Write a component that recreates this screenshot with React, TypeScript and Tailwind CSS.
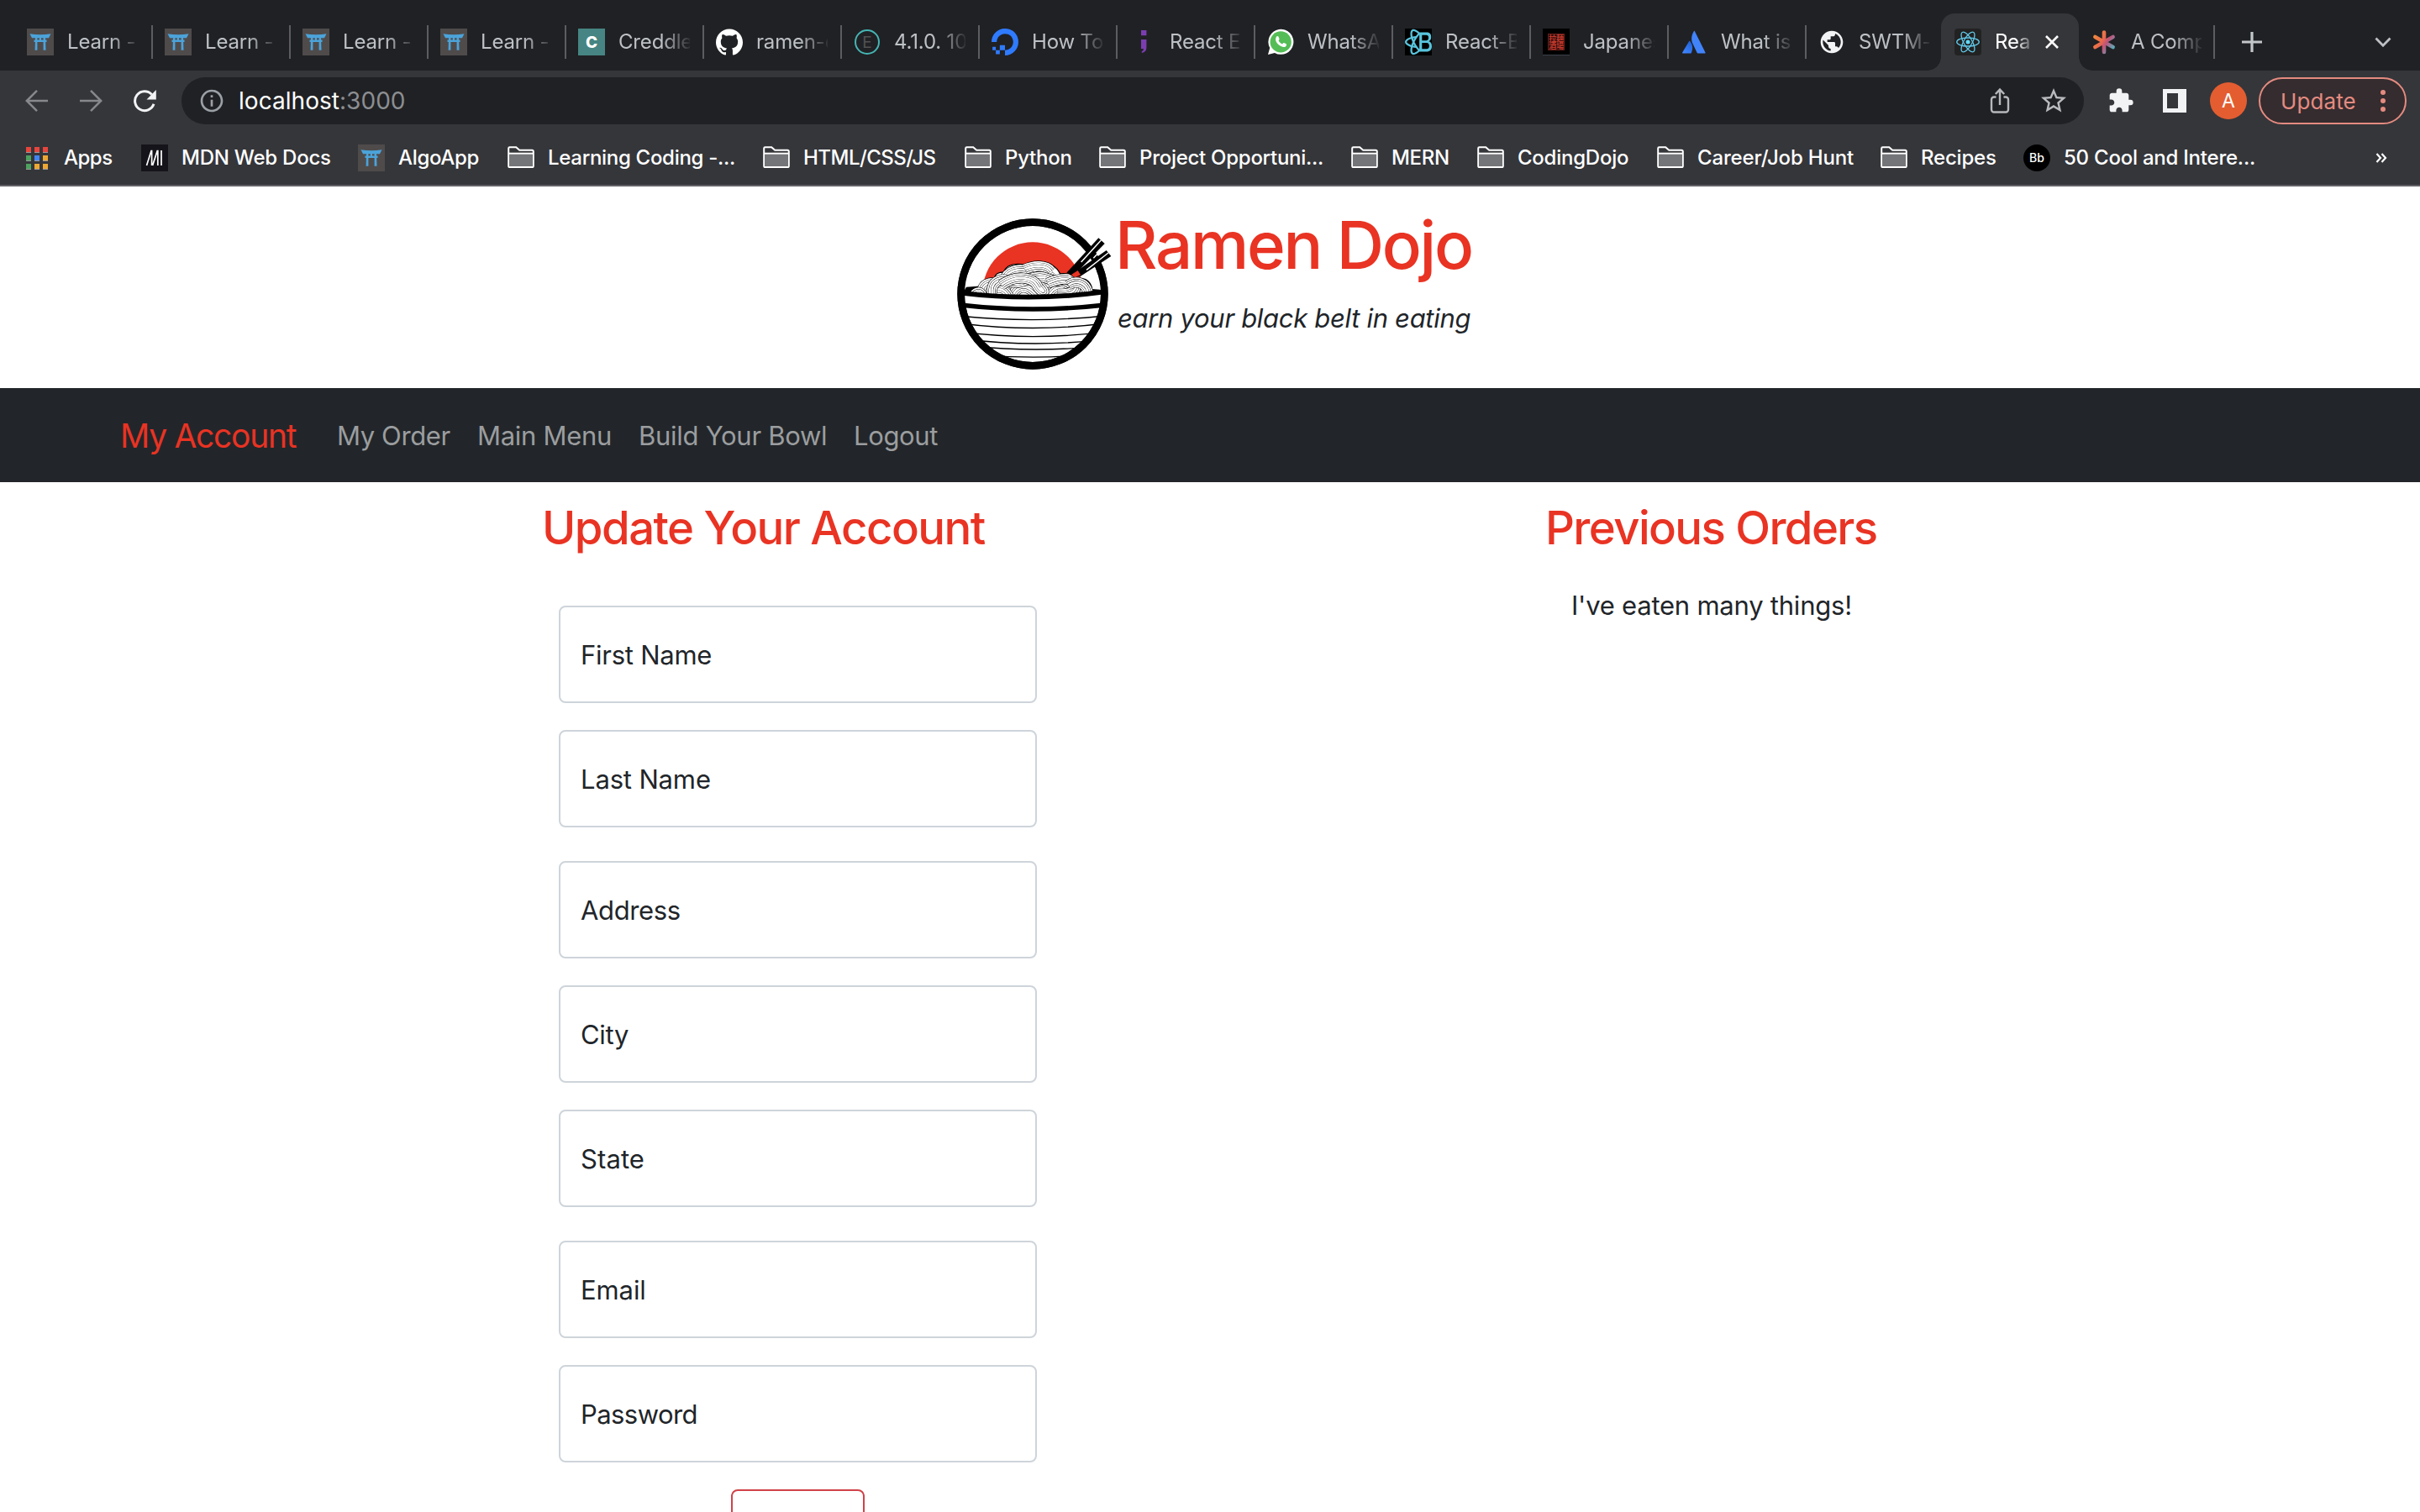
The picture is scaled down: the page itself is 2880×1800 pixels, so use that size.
import React from 'react';
import { SiDigitalocean, SiGithub, SiReactbootstrap } from 'react-icons/si';
import { MdExtension, MdInfoOutline, MdPublic, MdStarBorder } from 'react-icons/md';

function Torii() {
  return (
    <svg viewBox="0 0 32 32" className="size-8 bg-[#4f4b4b]">
      <path d="M3.5 6.3c8 1.4 17 1.4 25 0L26 11.2H6z" fill="#4ba3da" />
      <path d="M8.5 13.4h15v2.6h-15zM10 11h2.4v14.8H9.6zM19.6 11H22l.5 14.8h-2.9zM14.8 11h2.2v3h-2.2z" fill="#4ba3da" />
    </svg>
  );
}

function Credly() {
  return (
    <span className="flex size-8 items-center justify-center bg-[#468583] font-['Inter'] text-[19px] font-extrabold leading-none text-white">
      C
    </span>
  );
}

function EcmaRing() {
  return (
    <span className="flex size-8 items-center justify-center">
      <span className="flex size-[30px] items-center justify-center rounded-full border-2 border-[#45b5b4] text-[19px] leading-none text-[#515254]">
        E
      </span>
    </span>
  );
}

function Semicolon() {
  return (
    <svg viewBox="0 0 32 32" className="size-8">
      <path d="M14 2h6.4v6.2H14zM14 13h6.4v9.5c0 3.8-2 6-5.6 6.6v-2c1.400-.5 2-1.500 2-3.200H14z" fill="#7a3eb1" />
    </svg>
  );
}

function WhatsApp() {
  return (
    <svg viewBox="0 0 32 32" className="size-8">
      <path d="M1 31l2.200-8A15 15 0 1 1 9 28.900z" fill="#fff" />
      <circle cx="16.200" cy="15.900" r="12.600" fill="#55bd56" />
      <path d="M11.600 9.200c.6-.4 1.500-.3 1.800.4l1.100 2.600c.2.600-.1 1-.9 2 .9 2 2.500 3.500 4.500 4.200.8-.9 1.200-1.700 1.900-1.400l2.600 1.300c.8.400.4 2.300-.7 3.100-1.300 1-3 .8-5.500-.4-3-1.400-5.200-4-6-6.300-.6-2-.1-4.500 1.200-5.500z" fill="#fff" />
    </svg>
  );
}

function JapaneseSeal() {
  return (
    <span className="flex size-8 items-center justify-center border-b border-[#3a4048] bg-black">
      <span className="flex size-5 flex-col items-center justify-center border border-[#6b201a] bg-[#2a0c0a] font-['Noto_Sans_CJK_JP',sans-serif] text-[9px] font-bold leading-[9px] text-[#c23a2e]">
        <span>拉麺</span>
        <span>酒場</span>
      </span>
    </span>
  );
}

function Atlas() {
  return (
    <svg viewBox="0 0 32 32" className="size-8">
      <defs>
        <linearGradient id="atlas" x1="0.8" y1="0" x2="0.2" y2="1">
          <stop offset="0" stopColor="#1f5fd6" />
          <stop offset="1" stopColor="#3f86ff" />
        </linearGradient>
      </defs>
      <path d="M10.200 15c.3-.5.800-.5 1 0 3.600 5 3.800 9 1.400 14.500H2.800c-.6 0-.9-.5-.6-1.100z" fill="url(#atlas)" />
      <path d="M15.800 3.200c.3-.6.800-.6 1.100 0l12.600 25.200c.3.600 0 1.100-.6 1.100h-8.300c-.5 0-.8-.2-1-.7L14.500 18c-2.100-4.800-1.700-9.500 1.300-14.800z" fill="#4183fb" />
    </svg>
  );
}

function ReactMark() {
  return (
    <svg viewBox="0 0 32 32" className="size-8 rounded-[4px] bg-[#222222]">
      <g fill="none" stroke="#61c9ea" strokeWidth="1.300">
        <ellipse cx="16" cy="16" rx="13.300" ry="5" />
        <ellipse cx="16" cy="16" rx="13.300" ry="5" transform="rotate(60 16 16)" />
        <ellipse cx="16" cy="16" rx="13.300" ry="5" transform="rotate(120 16 16)" />
      </g>
      <circle cx="16" cy="16" r="2.500" fill="#61dafb" />
    </svg>
  );
}

function Asterisk() {
  return (
    <svg viewBox="0 0 32 32" className="size-8">
      <defs>
        <linearGradient id="aster" gradientUnits="userSpaceOnUse" x1="4" y1="8" x2="28" y2="24">
          <stop offset="0" stopColor="#f08a3c" />
          <stop offset="0.400" stopColor="#ea6a4c" />
          <stop offset="0.600" stopColor="#c05378" />
          <stop offset="1" stopColor="#4fb3bf" />
        </linearGradient>
      </defs>
      <g stroke="url(#aster)" strokeWidth="4.600" strokeLinecap="round">
        <path d="M16.010 4.500L16 28M5.400 9.900l21.200 12.200M5.400 22.100L26.600 9.900" />
      </g>
    </svg>
  );
}

function Mdn() {
  return (
    <svg viewBox="0 0 32 32" className="size-8 bg-[#15141a]">
      <path d="M6.500 25L12 7.500h.6V25M13.600 25l5.600-17.500h.6V25M24 7v18" fill="none" stroke="#fff" strokeWidth="1.700" />
    </svg>
  );
}

function Folder() {
  return (
    <svg viewBox="0 0 32 32" className="size-8">
      <path d="M1.200 4.600c0-.9.500-1.400 1.400-1.400h7.600l4 3.600h15c1 0 1.600.6 1.600 1.600v17c0 1-.6 1.600-1.600 1.600H2.800c-1 0-1.600-.6-1.600-1.600z" fill="#35363a" stroke="#fff" strokeWidth="2" />
      <path d="M2 11.500h28V26H2z" fill="#747578" />
      <path d="M1.200 10.700h29.600" stroke="#fff" strokeWidth="2" />
    </svg>
  );
}

const APP_DOTS = [
  'bg-[#e8453c]', 'bg-[#e8453c]', 'bg-[#e8453c]',
  'bg-[#4da15e]', 'bg-[#4285f4]', 'bg-[#eda833]',
  'bg-[#4da15e]', 'bg-[#eda833]', 'bg-[#eda833]',
];

function AppsGrid() {
  return (
    <span className="flex size-8 items-center justify-center">
      <span className="grid grid-cols-3 gap-x-1 gap-y-[3px]">
        {APP_DOTS.map((c, i) => (
          <span key={i} className={`h-[7px] w-1.5 border-b border-[#9a9a9a] ${c}`} />
        ))}
      </span>
    </span>
  );
}

const TABS: { icon: React.ReactNode; label: string }[] = [
  { icon: <Torii />, label: 'Learn -' },
  { icon: <Torii />, label: 'Learn -' },
  { icon: <Torii />, label: 'Learn -' },
  { icon: <Torii />, label: 'Learn -' },
  { icon: <Credly />, label: 'Creddle' },
  { icon: <SiGithub className="size-8 text-white" />, label: 'ramen-d' },
  { icon: <EcmaRing />, label: '4.1.0. 10' },
  { icon: <SiDigitalocean className="size-8 text-[#2f7bff]" />, label: 'How To' },
  { icon: <Semicolon />, label: 'React E' },
  { icon: <WhatsApp />, label: 'WhatsA' },
  { icon: <span className="block size-8 bg-black"><SiReactbootstrap className="size-8 text-[#58c4dc]" /></span>, label: 'React-B' },
  { icon: <JapaneseSeal />, label: 'Japanes' },
  { icon: <Atlas />, label: 'What is' },
];

const FADE = '[mask-image:linear-gradient(to_right,black_60%,transparent_104%)]';

function Tab({ icon, label }: { icon: React.ReactNode; label: string }) {
  return (
    <div className="flex h-[68px] w-[164px] shrink-0 items-center pl-3.5">
      {icon}
      <span className={`ml-4 w-[85px] shrink-0 overflow-hidden whitespace-nowrap ${FADE}`}>{label}</span>
      <span className="ml-[15px] h-10 w-0.5 shrink-0 bg-[#5b5d61]" />
    </div>
  );
}

function TabStrip() {
  return (
    <div className="flex h-[84px] shrink-0 items-center bg-[#202124] pl-[18px] pt-4 text-[24px] leading-8 tracking-[-0.17px] text-[#bdc1c6]">
      {TABS.map((t, i) => (
        <Tab key={i} {...t} />
      ))}
      <div className="flex h-[68px] w-40 shrink-0 items-center pl-3.5">
        <MdPublic className="size-8 text-[#f1f3f4]" />
        <span className={`ml-4 w-[84px] overflow-hidden whitespace-nowrap ${FADE}`}>SWTM-</span>
      </div>
      <div className="relative flex h-[68px] w-[164px] shrink-0 items-center rounded-t-[16px] bg-[#35363a] pl-4">
        <span className="absolute -left-4 bottom-0 size-4 bg-[radial-gradient(circle_at_0_0,transparent_15.500px,#35363a_16px)]" />
        <span className="absolute -right-4 bottom-0 size-4 bg-[radial-gradient(circle_at_100%_0,transparent_15.500px,#35363a_16px)]" />
        <ReactMark />
        <span className="ml-4 w-[43px] overflow-hidden whitespace-nowrap text-white [mask-image:linear-gradient(to_right,black_60%,transparent_110%)]">
          Rea
        </span>
        <svg viewBox="0 0 16 16" className="ml-[17px] size-4">
          <path d="M1 1l14 14M15 1L1 15" stroke="#fff" strokeWidth="2.600" />
        </svg>
      </div>
      <div className="flex h-[68px] w-[162px] shrink-0 items-center pl-3.5">
        <Asterisk />
        <span className={`ml-4 w-[84px] shrink-0 overflow-hidden whitespace-nowrap ${FADE}`}>A Comp</span>
        <span className="ml-3.5 h-10 w-0.5 shrink-0 bg-[#5b5d61]" />
      </div>
      <svg viewBox="0 0 24 24" className="ml-8 size-6">
        <path d="M12 0v24M0 12h24" stroke="#c4c7ca" strokeWidth="3.200" />
      </svg>
      <svg viewBox="0 0 20 12" className="ml-auto mr-[34px] h-3 w-5">
        <path d="M1.500 1.500L10 10.200l8.500-8.700" fill="none" stroke="#bdc1c6" strokeWidth="2.800" />
      </svg>
    </div>
  );
}

function Toolbar() {
  return (
    <div className="flex h-[72px] shrink-0 items-center bg-[#35363a]">
      <svg viewBox="0 0 28 28" className="ml-[30px] size-7">
        <path d="M27 14H2.500M14 1.800L1.800 14 14 26.200" fill="none" stroke="#87888b" strokeWidth="2.500" />
      </svg>
      <svg viewBox="0 0 28 28" className="ml-9 size-7">
        <path d="M1 14h24.500M14 1.800L26.200 14 14 26.200" fill="none" stroke="#87888b" strokeWidth="2.500" />
      </svg>
      <svg viewBox="0 0 28 28" className="ml-9 size-7">
        <path d="M25 17.800A11.500 11.500 0 1 1 22.600 6.400" fill="none" stroke="#f1f3f4" strokeWidth="3" />
        <path d="M27.800 1v11.500H16.500z" fill="#f1f3f4" />
      </svg>
      <div className="ml-[30px] flex h-14 w-[2264px] shrink-0 items-center rounded-full bg-[#202124] pl-5">
        <MdInfoOutline className="size-8 text-[#9aa0a6]" />
        <span className="ml-4 text-[28px] leading-9 tracking-[0.04px] text-white">
          localhost<span className="text-[#8c8e92]">:3000</span>
        </span>
        <svg viewBox="0 0 24 32" className="ml-auto mr-[34px] h-8 w-6">
          <path d="M7.500 11.500H5A3 3 0 0 0 2 14.500v12a3 3 0 0 0 3 3h14a3 3 0 0 0 3-3v-12a3 3 0 0 0-3-3h-2.500M12 21V3M6.800 8L12 2.600 17.200 8" fill="none" stroke="#b6b8bb" strokeWidth="2.400" />
        </svg>
        <MdStarBorder className="mr-[18px] size-9 text-[#b9bbbe]" />
      </div>
      <MdExtension className="ml-7 size-8 text-[#f1f3f4]" />
      <div className="ml-[34px] h-7 w-7 border-y-[5px] border-l-[5px] border-r-[10px] border-[#f1f3f4]" />
      <span className="ml-7 flex size-11 items-center justify-center rounded-full bg-[#e35d31] text-[23px] text-white">A</span>
      <div className="ml-3.5 flex h-14 w-44 items-center rounded-full border-2 border-[#e58b80] bg-[#342c2f] pl-6 text-[26px] tracking-[0.1px] text-[#e58b80]">
        Update
        <span className="ml-auto mr-[23px] flex flex-col gap-1">
          <span className="size-1.5 rounded-full bg-[#e58b80]" />
          <span className="size-1.5 rounded-full bg-[#e58b80]" />
          <span className="size-1.5 rounded-full bg-[#e58b80]" />
        </span>
      </div>
    </div>
  );
}

const BOOKMARKS: { icon: React.ReactNode; label: string; w: string }[] = [
  { icon: <AppsGrid />, label: 'Apps', w: 'w-[140px] tracking-[-0.5px]' },
  { icon: <Mdn />, label: 'MDN Web Docs', w: 'w-[258px] tracking-[-0.24px]' },
  { icon: <Torii />, label: 'AlgoApp', w: 'w-[178px] tracking-[-0.33px]' },
  { icon: <Folder />, label: 'Learning Coding -...', w: 'w-[304px] tracking-[-0.3px]' },
  { icon: <Folder />, label: 'HTML/CSS/JS', w: 'w-[240px] tracking-[-0.52px]' },
  { icon: <Folder />, label: 'Python', w: 'w-[160px] tracking-[-0.24px]' },
  { icon: <Folder />, label: 'Project Opportuni...', w: 'w-[300px] tracking-[-0.27px]' },
  { icon: <Folder />, label: 'MERN', w: 'w-[150px] tracking-[-0.31px]' },
  { icon: <Folder />, label: 'CodingDojo', w: 'w-[214px] tracking-[-0.24px]' },
  { icon: <Folder />, label: 'Career/Job Hunt', w: 'w-[266px] tracking-[-0.17px]' },
  { icon: <Folder />, label: 'Recipes', w: 'w-[170px] tracking-[-0.19px]' },
  {
    icon: (
      <span className="flex size-8 items-center justify-center rounded-full bg-black text-[14px] font-medium leading-none tracking-normal">Bb</span>
    ),
    label: '50 Cool and Intere...',
    w: 'w-[300px] tracking-[-0.23px]',
  },
];

function BookmarksBar() {
  return (
    <div className="flex h-[66px] shrink-0 items-center border-b-2 border-[#626166] bg-[#35363a] pl-7 text-[24px] font-medium leading-8 text-white">
      {BOOKMARKS.map((b) => (
        <div key={b.label} className={`flex shrink-0 items-center gap-4 whitespace-nowrap ${b.w}`}>
          {b.icon}
          <span>{b.label}</span>
        </div>
      ))}
      <svg viewBox="0 0 14 12" className="ml-auto mr-[39px] h-3 w-3.5">
        <path d="M1.500 1l4.500 5-4.500 5M7.500 1L12 6l-4.500 5" fill="none" stroke="#fff" strokeWidth="2.200" />
      </svg>
    </div>
  );
}

const NOODLES = [
  'M120 320C100 265 150 245 190 270S215 330 190 340',
  'M225 340C215 285 260 262 290 285S330 320 310 345',
  'M350 340C350 285 390 262 420 290S430 330 425 345',
  'M445 340C440 285 470 265 500 310',
  'M85 308C97 290 112 288 118 312',
  'M405 320C430 275 470 285 470 330',
  'M150 320C150 270 200 270 215 320',
  'M200 240C220 208 270 205 290 228S345 236 366 218',
  'M268 212C300 196 345 194 362 218',
  'M152 300C146 250 190 240 222 256S300 225 345 243S390 256 398 242',
  'M350 262C400 240 446 240 450 268S420 302 385 300',
  'M185 268C240 226 300 244 312 268S352 302 325 275',
  'M425 268C452 248 486 260 494 292',
];

const RINGS: [number, string][] = [
  [38, '#000'],
  [34.5, '#fff'],
  [24, '#000'],
  [21.5, '#fff'],
  [10, '#000'],
  [7.8, '#fff'],
];

function BowlLogo() {
  return (
    <svg viewBox="0 0 600 600" className="size-[200px] shrink-0">
      <defs>
        <clipPath id="inside">
          <circle cx="297" cy="300" r="250" />
        </clipPath>
        <clipPath id="aboveRim">
          <path d="M0 0H600V296Q298 325 0 296z" />
        </clipPath>
      </defs>
      <circle cx="297" cy="300" r="256" fill="#fff" stroke="#000" strokeWidth="26" />
      <g clipPath="url(#aboveRim)">
        <circle cx="297" cy="294" r="179" fill="#e93323" />
        <path d="M40 230H122L108 300H40zM486 230H548V300H486z" fill="#fff" />
        <path d="M48 296l12-21 60-4v40zM548 296l-12-12-60-4v30z" fill="#000" />
        <path
          d="M72 305C78 280 100 280 112 272C112 250 135 246 162 246C160 226 180 222 192 222C205 192 240 190 270 196C300 182 350 182 368 198C380 205 388 214 395 228C420 224 450 234 460 248C490 238 510 264 508 290L520 305z"
          fill="#fff"
          stroke="#000"
          strokeWidth="4"
        />
        {NOODLES.map((d) => (
          <g key={d} fill="none">
            {RINGS.map(([w, c]) => (
              <path key={w} d={d} stroke={c} strokeWidth={w} />
            ))}
          </g>
        ))}
      </g>
      <circle cx="297" cy="300" r="256" fill="none" stroke="#000" strokeWidth="26" />
      <g clipPath="url(#inside)" fill="none" stroke="#000">
        <path d="M40 296Q298 328 556 292" strokeWidth="17" />
        <path d="M40 339Q298 369 556 339" strokeWidth="16" />
        <path d="M40 379Q298 405 556 378" strokeWidth="4" />
        <path d="M40 405Q298 438 556 405" strokeWidth="4" />
        <path d="M40 435Q298 469 556 435" strokeWidth="4" />
        <path d="M60 462Q298 491 540 464" strokeWidth="4" />
        <path d="M80 486Q298 509 520 488" strokeWidth="4" />
        <path d="M120 518Q298 533 480 518" strokeWidth="4" />
      </g>
      <path d="M418 224L532 100L554 120L440 238z" fill="#000" />
      <path d="M440 240L462 212L560 144L577 165L466 238z" fill="#000" />
      <path d="M434 232l24-16 10 16-20 8z" fill="#e93323" />
      <g stroke="#fff" strokeWidth="4.500">
        <path d="M470 186L541 108M489 214L567 153M514 172l24-26" />
      </g>
    </svg>
  );
}

function Header() {
  return (
    <header className="flex h-60 shrink-0 items-start bg-white pl-[1130px] pt-7">
      <BowlLogo />
      <div className="-ml-[3px] whitespace-nowrap">
        <h1 className="h-[84px] text-[78px] font-medium leading-[84px] tracking-[-2.27px] text-[#e93323]">Ramen Dojo</h1>
        <p className="mt-[21px] pl-[3px] text-[31px] italic leading-12 tracking-[-0.31px] text-[#212529]">earn your black belt in eating</p>
      </div>
    </header>
  );
}

function NavBar() {
  return (
    <nav className="flex h-28 shrink-0 items-center whitespace-nowrap bg-[#22262a] pl-[142px] pt-0.5 text-[31px] leading-12 text-[#9b9d9f]">
      <a className="w-[259px] pl-px text-[39px] tracking-[-1.28px] text-[#e93323]">My Account</a>
      <a className="w-[167px] tracking-[-0.4px]">My Order</a>
      <a className="w-48 tracking-[-0.3px]">Main Menu</a>
      <a className="w-64 tracking-[-0.28px]">Build Your Bowl</a>
      <a className="tracking-[-0.35px]">Logout</a>
    </nav>
  );
}

const FIELDS: { label: string; space: string }[] = [
  { label: 'First Name', space: 'mb-8 tracking-[-0.25px]' },
  { label: 'Last Name', space: 'mb-10 tracking-[-0.15px]' },
  { label: 'Address', space: 'mb-8 tracking-[-0.35px]' },
  { label: 'City', space: 'mb-8 tracking-[-0.3px]' },
  { label: 'State', space: 'mb-10 tracking-[0.1px]' },
  { label: 'Email', space: 'mb-8 tracking-[-0.1px]' },
  { label: 'Password', space: 'mb-8 tracking-[-0.57px]' },
];

export default function App() {
  return (
    <div className="flex h-[1800px] w-[2880px] flex-col overflow-hidden bg-white font-['Inter',sans-serif]">
      <TabStrip />
      <Toolbar />
      <BookmarksBar />
      <Header />
      <NavBar />
      <main className="flex shrink-0 items-start pt-[22px] text-[31px] leading-12 text-[#212529]">
        <section className="ml-[645px] w-[589px]">
          <h3 className="whitespace-nowrap text-[54.5px] font-medium leading-16 tracking-[-1.53px] text-[#e93323]">Update Your Account</h3>
          <form className="ml-5 mt-[61px] flex w-[569px] flex-col">
            {FIELDS.map((f) => (
              <label key={f.label} className={`flex h-[116px] items-center rounded-lg border-2 border-[#ced4da] pl-6 pt-0.5 ${f.space}`}>
                {f.label}
              </label>
            ))}
            <button type="button" className="flex h-[78px] w-[159px] items-center justify-center self-center rounded-lg border-2 border-[#d04248] pt-0.5 text-[#d04248]">
              Update
            </button>
          </form>
        </section>
        <section className="ml-[605px] whitespace-nowrap">
          <h3 className="text-[54.5px] font-medium leading-16 tracking-[-1.6px] text-[#e93323]">Previous Orders</h3>
          <p className="ml-[31px] mt-[37px] tracking-[-0.23px]">I've eaten many things!</p>
        </section>
      </main>
    </div>
  );
}
